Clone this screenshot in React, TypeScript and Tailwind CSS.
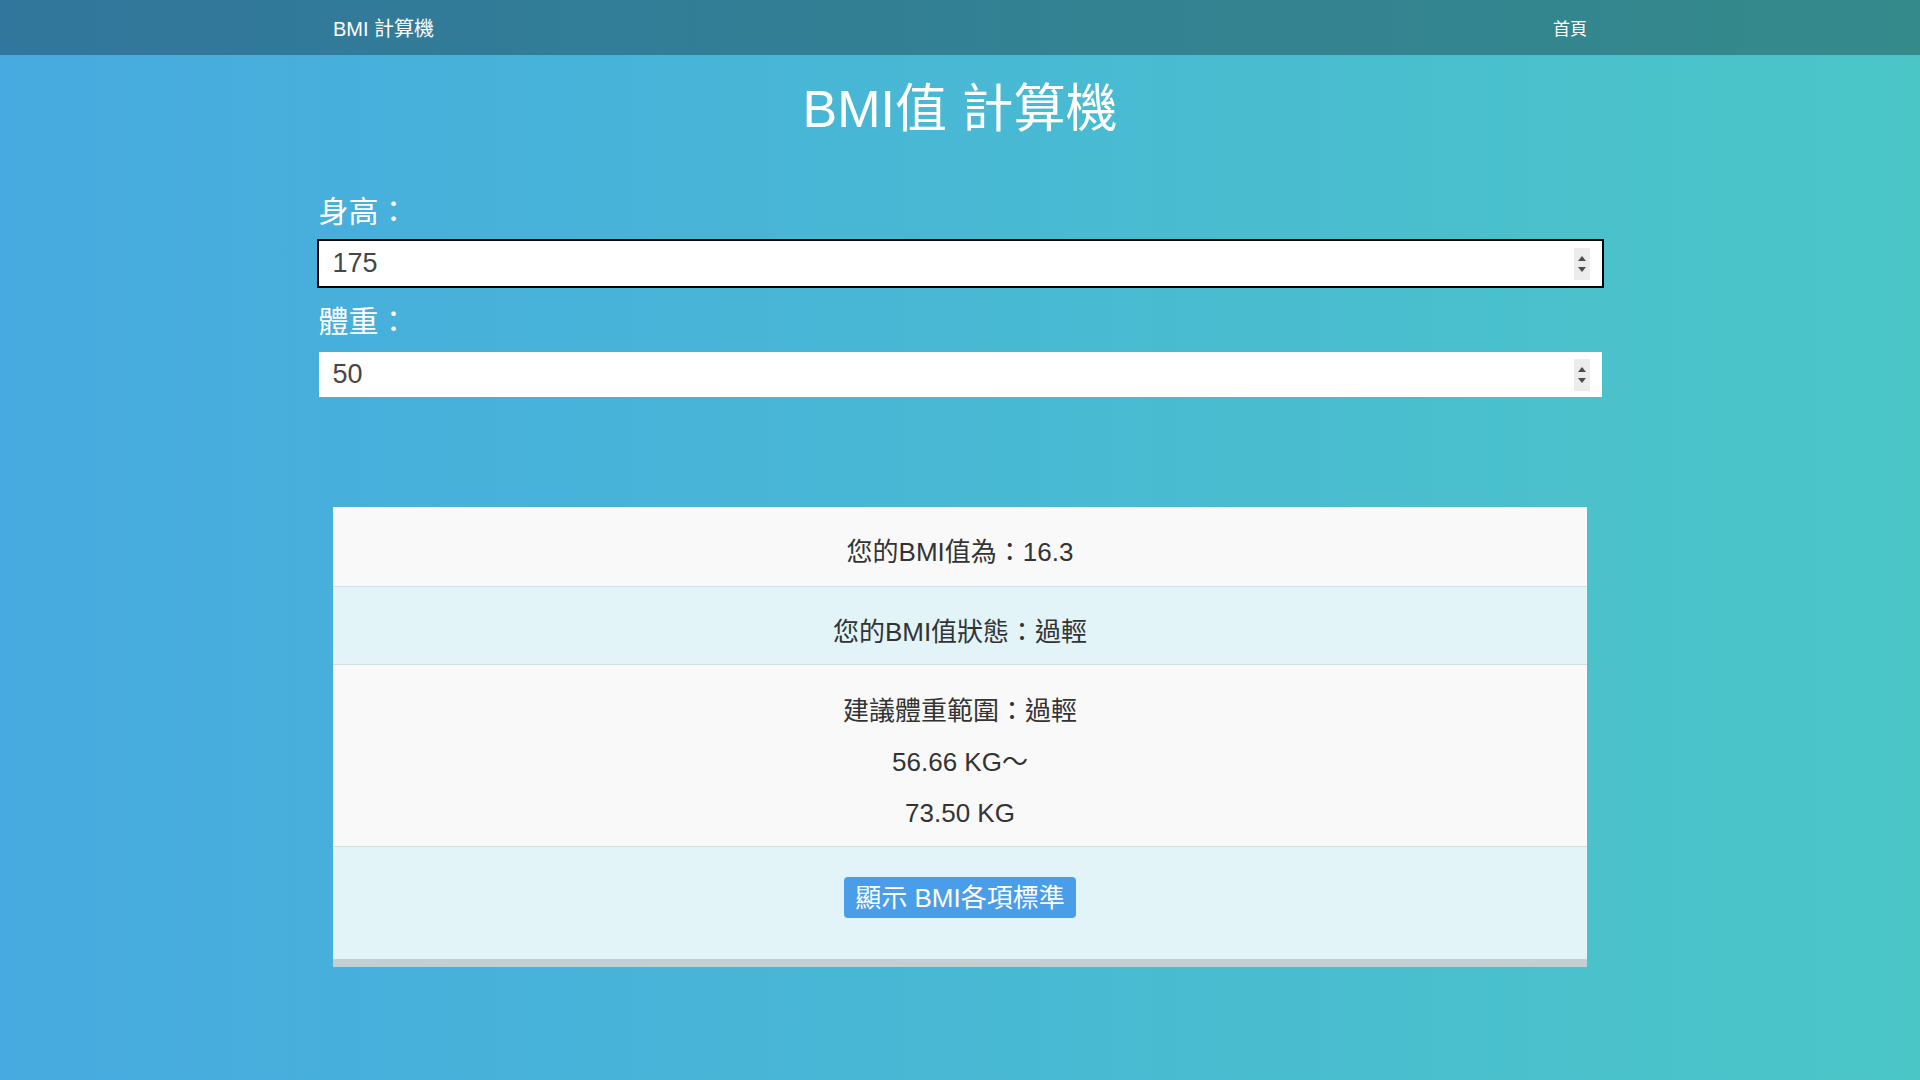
import React from "react";

/* Spin arrows drawn by hand — headless Chrome only paints the native ones on hover. */
function Spinner() {
  return (
    <div className="absolute right-[12px] top-1/2 -translate-y-1/2 w-[16px] h-[32px] bg-[#ececec] flex flex-col items-center justify-center gap-[6px]">
      <svg width="8" height="5" viewBox="0 0 8 5">
        <polygon points="4,0 8,5 0,5" fill="#4d4d4d" />
      </svg>
      <svg width="8" height="5" viewBox="0 0 8 5">
        <polygon points="0,0 8,0 4,5" fill="#4d4d4d" />
      </svg>
    </div>
  );
}

function NumberField({ value, focused = false, className = "" }: { value: string; focused?: boolean; className?: string }) {
  return (
    <div className={`relative ${className}`}>
      <input
        readOnly
        value={value}
        className={`block w-full h-[45px] pl-[14px] pr-[40px] bg-white text-[27px] text-[#474747] ${
          focused ? "outline-2 outline-black" : "outline-none"
        }`}
      />
      <Spinner />
    </div>
  );
}

export default function App() {
  return (
    <div className="min-h-screen bg-linear-to-r from-[#47aae0] to-[#4bc6c7] font-['Liberation_Sans','Noto_Sans_CJK_TC',sans-serif]">
      {/* Navbar */}
      <nav className="h-[55px] bg-black/30">
        <div className="w-[1254px] mx-auto h-full pt-[2px] flex items-center justify-between">
          <a className="text-white text-[20px] leading-none">BMI 計算機</a>
          <a className="text-white text-[17px] leading-none mt-[2px]">首頁</a>
        </div>
      </nav>

      <main className="w-[1283px] mx-auto">
        <h1 className="mt-[23px] text-center text-white text-[52px] leading-[62px]">BMI值 計算機</h1>

        <label className="block mt-[54px] text-white text-[30px] leading-[36px]">身高：</label>
        <NumberField value="175" focused className="mt-[11px]" />

        <label className="block mt-[18px] text-white text-[30px] leading-[36px]">體重：</label>
        <NumberField value="50" className="mt-[12px]" />

        {/* Result table */}
        <section className="mt-[110px] w-[1254px] mx-auto text-center text-[#333] text-[26px] leading-[36px]">
          <div className="bg-[#f9f9f9] pt-[27px] pb-[16px]">您的BMI值為：16.3</div>
          <div className="bg-[#e2f4f8] border-t border-[#d4dde0] pt-[27px] pb-[14px]">您的BMI值狀態：過輕</div>
          <div className="bg-[#f9f9f9] border-t border-[#d4dde0] pt-[28px] pb-[15px] flex flex-col gap-[15px]">
            <p>建議體重範圍：過輕</p>
            <p>56.66 KG～</p>
            <p>73.50 KG</p>
          </div>
          <div className="bg-[#e2f4f8] border-t border-[#d4dde0] pt-[30px] pb-[41px] flex justify-center">
            <button className="h-[41px] px-[11px] rounded-[4px] bg-[#4a9de8] text-white text-[26px] leading-none">
              顯示 BMI各項標準
            </button>
          </div>
          <div className="h-[8px] bg-[#c2d0d4]" />
        </section>
      </main>
    </div>
  );
}
